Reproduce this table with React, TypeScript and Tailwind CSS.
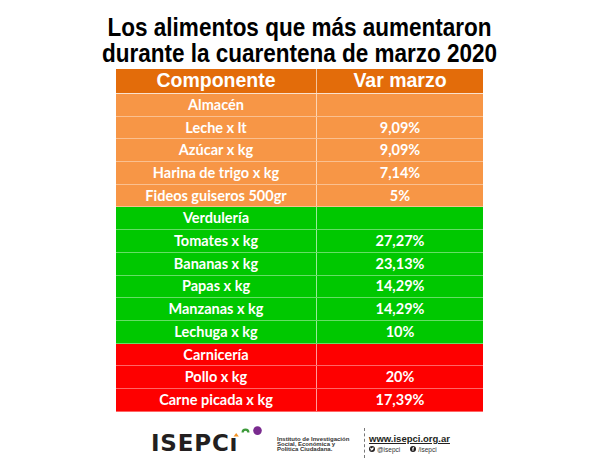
import { FaTwitter, FaFacebookF } from "react-icons/fa";

type Row = { name: string; value: string; tone: "orange" | "green" | "red" };

const rows: Row[] = [
  { name: "Almacén", value: "", tone: "orange" },
  { name: "Leche x lt", value: "9,09%", tone: "orange" },
  { name: "Azúcar x kg", value: "9,09%", tone: "orange" },
  { name: "Harina de trigo x kg", value: "7,14%", tone: "orange" },
  { name: "Fideos guiseros 500gr", value: "5%", tone: "orange" },
  { name: "Verdulería", value: "", tone: "green" },
  { name: "Tomates x kg", value: "27,27%", tone: "green" },
  { name: "Bananas x kg", value: "23,13%", tone: "green" },
  { name: "Papas x kg", value: "14,29%", tone: "green" },
  { name: "Manzanas x kg", value: "14,29%", tone: "green" },
  { name: "Lechuga x kg", value: "10%", tone: "green" },
  { name: "Carnicería", value: "", tone: "red" },
  { name: "Pollo x kg", value: "20%", tone: "red" },
  { name: "Carne picada x kg", value: "17,39%", tone: "red" },
];

const toneBg = {
  orange: "bg-[#f79646]",
  green: "bg-[#00c800]",
  red: "bg-[#fe0000]",
};

function Logo() {
  return (
    <div className="relative w-[110px] pt-[6px]">
      <span className="font-['DejaVu_Sans',sans-serif] font-bold text-[23px] leading-none tracking-[0.8px] text-[#231f20]">
        ISEPCı
      </span>
      {/* coloured marks above the logo */}
      <svg className="absolute left-[81px] top-0" width="32" height="12" viewBox="0 0 32 12">
        <polygon points="1.6,10.5 4.2,7 6.8,10.5" fill="#f39325" />
        <path d="M9.5 6.5 A4 4 0 0 1 17.5 6.5 L15.3 6.5 A1.8 1.8 0 0 0 11.7 6.5 Z" fill="#3d9a3a" />
        <circle cx="25.5" cy="4.6" r="4.3" fill="#7a2b8f" />
      </svg>
    </div>
  );
}

export default function App() {
  return (
    <div className="w-[600px] h-[468px] bg-white overflow-hidden font-['Liberation_Sans',Arial,sans-serif]">
      {/* Title */}
      <div className="pt-[14px] flex flex-col items-center">
        <h1 className="scale-x-[0.9] text-center font-bold text-[25px] leading-[26px] text-black whitespace-nowrap">
          <div>Los alimentos que más aumentaron</div>
          <div>durante la cuarentena de marzo 2020</div>
        </h1>
      </div>

      {/* Table */}
      <div className="mt-[3px] ml-[116px] w-[367px]">
        <div className="flex h-[25px] bg-[#e36c0a] border-b border-white/80 text-white font-bold text-[19.5px]">
          <div className="w-[201px] flex items-center justify-center border-r border-white/60">Componente</div>
          <div className="flex-1 flex items-center justify-center">Var marzo</div>
        </div>
        {rows.map((r) => (
          <div
            key={r.name}
            className={`flex h-[22.7px] ${toneBg[r.tone]} border-b border-white/40 text-white font-['Lato',sans-serif] font-bold text-[14.5px]`}
          >
            <div className="w-[201px] flex items-center justify-center border-r border-white/60">{r.name}</div>
            <div className="flex-1 flex items-center justify-center">{r.value}</div>
          </div>
        ))}
      </div>

      {/* Footer */}
      <div className="mt-[14px] pl-[151px] flex items-start">
        <Logo />
        <div className="ml-[16px] w-[80px] pt-[11px] font-bold text-[6px] leading-[5px] text-[#333]">
          Instituto de Investigación
          <br />
          Social, Económica y
          <br />
          Política Ciudadana.
        </div>
        <div className="ml-[7px] mt-[2px] h-[30px] border-l border-dashed border-[#777]" />
        <div className="ml-[4px] mt-[8px]">
          <div className="font-bold text-[9.5px] leading-[10px] text-[#231f20] underline">www.isepci.org.ar</div>
          <div className="mt-[2px] flex items-center text-[6.5px] leading-[7px] text-[#333]">
            <span className="w-[6px] h-[6px] rounded-full bg-[#231f20] flex items-center justify-center">
              <FaTwitter className="text-white" size={4} />
            </span>
            <span className="ml-[2px]">@isepci</span>
            <span className="ml-[10px] w-[6px] h-[6px] rounded-full bg-[#231f20] flex items-center justify-center">
              <FaFacebookF className="text-white" size={4} />
            </span>
            <span className="ml-[2px]">/isepci</span>
          </div>
        </div>
      </div>
    </div>
  );
}
